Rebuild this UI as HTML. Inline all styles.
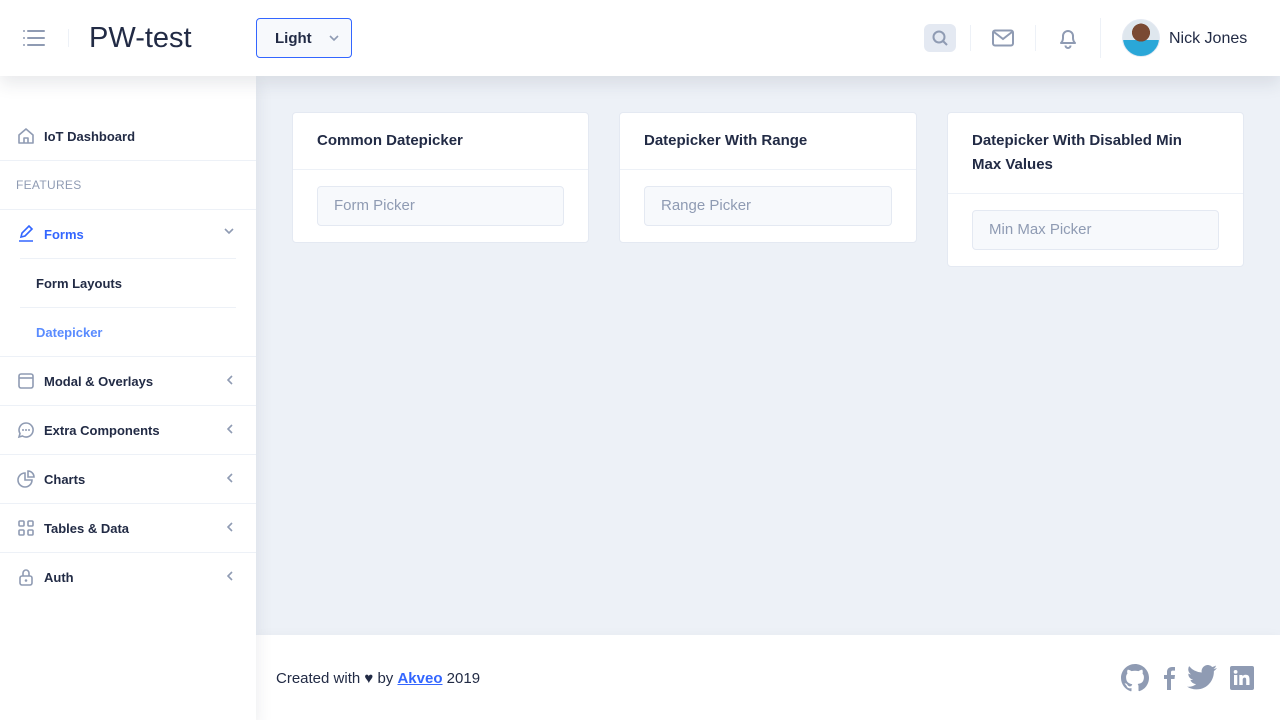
<!DOCTYPE html>
<html><head><meta charset="utf-8"><style>
*{box-sizing:border-box;margin:0;padding:0}
body{width:1280px;height:720px;overflow:hidden;background:#edf1f7;font-family:"Liberation Sans",sans-serif;color:#222b45;position:relative}
.hdr{position:absolute;left:0;top:0;width:1280px;height:76px;background:#fff;box-shadow:0 0.5rem 1rem 0 rgba(44,51,73,.1);z-index:3}
.side{position:absolute;left:0;top:76px;width:256px;height:644px;background:#fff;box-shadow:0 .5rem 1rem 0 rgba(44,51,73,.1);z-index:2}
.it{position:absolute;left:0;width:256px;height:49px;border-bottom:1px solid #edf1f7;font-size:13px;font-weight:bold;display:flex;align-items:center;padding-left:44px}
.it svg.ic{position:absolute;left:17px;top:15px}
.it .ch{position:absolute;right:22px;top:18px}
.card{position:absolute;top:112px;background:#fff;border:1px solid #e4e9f2;border-radius:4px}
.card h3{font-size:15px;font-weight:bold;padding:16px 24px;border-bottom:1px solid #edf1f7;line-height:24px}
.inp{margin:16px 24px;height:40px;border:1px solid #e4e9f2;background:#f7f9fc;border-radius:4px;color:#8f9bb3;font-size:15px;padding:0 16px;line-height:38px}
.foot{position:absolute;left:256px;top:635px;width:1024px;height:85px;background:#fff;box-shadow:0 .5rem 1rem 0 rgba(44,51,73,.1)}
.sep{position:absolute;width:1px;background:#edf1f7}
</style></head><body>
<div class="hdr">
<svg style="position:absolute;left:23px;top:29px" width="22" height="18" viewBox="0 0 22 18"><g fill="#8f9bb3"><rect x="0" y="1" width="2" height="2" rx="1"/><rect x="4" y="1" width="18" height="2" rx="1"/><rect x="0" y="8" width="2" height="2" rx="1"/><rect x="4" y="8" width="18" height="2" rx="1"/><rect x="0" y="15" width="2" height="2" rx="1"/><rect x="4" y="15" width="18" height="2" rx="1"/></g></svg>
<div class="sep" style="left:68px;top:29px;height:18px"></div>
<div style="position:absolute;left:89px;top:20px;font-size:29px;line-height:36px">PW-test</div>
<div style="position:absolute;left:256px;top:18px;width:96px;height:40px;border:1px solid #3366ff;border-radius:4px;background:#f7f9fc;font-weight:bold;font-size:15px;padding:11px 0 0 18px">Light<svg style="position:absolute;left:72px;top:16px" width="10" height="7" viewBox="0 0 10 7"><path d="M1 1l4 4 4-4" stroke="#8f9bb3" stroke-width="1.6" fill="none"/></svg></div>
<div style="position:absolute;left:924px;top:24px;width:32px;height:28px;background:#e4e9f2;border-radius:6px"><svg style="position:absolute;left:8px;top:6px" width="17" height="17" viewBox="0 0 17 17"><circle cx="7" cy="7" r="5.5" stroke="#8f9bb3" stroke-width="2" fill="none"/><path d="M11 11l4 4" stroke="#8f9bb3" stroke-width="2"/></svg></div>
<div class="sep" style="left:970px;top:25px;height:26px"></div>
<svg style="position:absolute;left:992px;top:29px" width="22" height="18" viewBox="0 0 22 18"><rect x="1" y="1.5" width="20" height="15" rx="2" stroke="#8f9bb3" stroke-width="2" fill="none"/><path d="M2 3l9 7 9-7" stroke="#8f9bb3" stroke-width="2" fill="none"/></svg>
<div class="sep" style="left:1035px;top:25px;height:26px"></div>
<svg style="position:absolute;left:1058px;top:27px" width="20" height="22" viewBox="0 0 20 22"><path d="M3 16c1-1 2-2 2-5V9a5 5 0 0110 0v2c0 3 1 4 2 5z" stroke="#8f9bb3" stroke-width="2" fill="none" stroke-linejoin="round"/><path d="M7.5 18.5a2.5 2.5 0 005 0" stroke="#8f9bb3" stroke-width="2" fill="none"/></svg>
<div class="sep" style="left:1100px;top:18px;height:40px"></div>
<div style="position:absolute;left:1122px;top:19px;width:38px;height:38px;border-radius:50%;background:radial-gradient(circle at 50% 35%,#7a4a33 0 30%,transparent 31%),linear-gradient(#dfe7ee 0 55%,#2aa7d8 55%);border:1px solid #e4e9f2"></div>
<div style="position:absolute;left:1169px;top:30px;font-size:16px">Nick Jones</div>
</div>
<div class="side">
<div class="it" style="top:36px;height:49px"><svg class="ic" width="18" height="18" viewBox="0 0 18 18"><path d="M2 8l7-6 7 6v8H2z M7 16v-5h4v5" stroke="#8f9bb3" stroke-width="1.6" fill="none" stroke-linejoin="round"/></svg>IoT Dashboard</div>
<div class="it" style="top:85px;color:#8f9bb3;font-weight:normal;font-size:12px;padding-left:16px;letter-spacing:.3px">FEATURES</div>
<div class="it" style="top:134px;color:#3366ff;border:none"><svg class="ic" width="18" height="18" viewBox="0 0 18 18"><path d="M4 12l1-4 7-7 3 3-7 7zM2 16h14" stroke="#3366ff" stroke-width="1.6" fill="none"/></svg>Forms<svg class="ch" width="10" height="7" viewBox="0 0 10 7"><path d="M1 1l4 4 4-4" stroke="#8f9bb3" stroke-width="1.6" fill="none"/></svg></div>
<div style="position:absolute;left:20px;top:182px;width:216px;height:1px;background:#edf1f7"></div>
<div class="it" style="top:183px;padding-left:36px;border:none">Form Layouts</div>
<div style="position:absolute;left:20px;top:231px;width:216px;height:1px;background:#edf1f7"></div>
<div class="it" style="top:232px;padding-left:36px;color:#598bff;height:49px">Datepicker</div>
<div class="it" style="top:281px"><svg class="ic" width="18" height="18" viewBox="0 0 18 18"><rect x="2" y="2" width="14" height="14" rx="2" stroke="#8f9bb3" stroke-width="1.6" fill="none"/><path d="M2 6h14" stroke="#8f9bb3" stroke-width="1.6"/></svg>Modal &amp; Overlays<svg class="ch" width="7" height="10" viewBox="0 0 7 10"><path d="M5 1L1 5l4 4" stroke="#8f9bb3" stroke-width="1.6" fill="none"/></svg></div>
<div class="it" style="top:330px"><svg class="ic" width="18" height="18" viewBox="0 0 18 18"><path d="M9 2a7 7 0 11-3.5 13L2 16l1-3.5A7 7 0 019 2z" stroke="#8f9bb3" stroke-width="1.6" fill="none"/><circle cx="6" cy="9" r="1" fill="#8f9bb3"/><circle cx="9" cy="9" r="1" fill="#8f9bb3"/><circle cx="12" cy="9" r="1" fill="#8f9bb3"/></svg>Extra Components<svg class="ch" width="7" height="10" viewBox="0 0 7 10"><path d="M5 1L1 5l4 4" stroke="#8f9bb3" stroke-width="1.6" fill="none"/></svg></div>
<div class="it" style="top:379px"><svg class="ic" width="18" height="18" viewBox="0 0 18 18"><path d="M8 3a7 7 0 107 7H8z M11 1v6h6a6 6 0 00-6-6z" stroke="#8f9bb3" stroke-width="1.6" fill="none"/></svg>Charts<svg class="ch" width="7" height="10" viewBox="0 0 7 10"><path d="M5 1L1 5l4 4" stroke="#8f9bb3" stroke-width="1.6" fill="none"/></svg></div>
<div class="it" style="top:428px"><svg class="ic" width="18" height="18" viewBox="0 0 18 18"><g stroke="#8f9bb3" stroke-width="1.6" fill="none"><rect x="2" y="2" width="5" height="5" rx="1"/><rect x="11" y="2" width="5" height="5" rx="1"/><rect x="2" y="11" width="5" height="5" rx="1"/><rect x="11" y="11" width="5" height="5" rx="1"/></g></svg>Tables &amp; Data<svg class="ch" width="7" height="10" viewBox="0 0 7 10"><path d="M5 1L1 5l4 4" stroke="#8f9bb3" stroke-width="1.6" fill="none"/></svg></div>
<div class="it" style="top:477px;border:none"><svg class="ic" width="18" height="18" viewBox="0 0 18 18"><rect x="3" y="8" width="12" height="9" rx="2" stroke="#8f9bb3" stroke-width="1.6" fill="none"/><path d="M6 8V5a3 3 0 016 0v3" stroke="#8f9bb3" stroke-width="1.6" fill="none"/><circle cx="9" cy="12.5" r="1.3" fill="#8f9bb3"/></svg>Auth<svg class="ch" width="7" height="10" viewBox="0 0 7 10"><path d="M5 1L1 5l4 4" stroke="#8f9bb3" stroke-width="1.6" fill="none"/></svg></div>
</div>
<div class="card" style="left:292px;width:297px;height:131px"><h3>Common Datepicker</h3><div class="inp">Form Picker</div></div>
<div class="card" style="left:619px;width:298px;height:131px"><h3>Datepicker With Range</h3><div class="inp">Range Picker</div></div>
<div class="card" style="left:947px;width:297px;height:155px"><h3 style="padding-right:50px">Datepicker With Disabled Min Max Values</h3><div class="inp">Min Max Picker</div></div>
<div class="foot">
<div style="position:absolute;left:20px;top:35px;font-size:15px">Created with ♥ by <b style="color:#3366ff;text-decoration:underline">Akveo</b> 2019</div>
<svg style="position:absolute;left:865px;top:29px" width="28" height="28" viewBox="0 0 16 16"><path fill="#8f9bb3" d="M8 0C3.6 0 0 3.6 0 8c0 3.5 2.3 6.5 5.5 7.600.4.1.5-.2.5-.4v-1.4c-2.200.5-2.700-1-2.700-1-.4-.9-.9-1.200-.9-1.200-.7-.5.1-.5.1-.5.8.1 1.200.8 1.200.8.7 1.200 1.900.9 2.300.7.1-.5.3-.9.5-1.100-1.800-.2-3.600-.9-3.600-4 0-.9.3-1.600.8-2.100-.1-.2-.4-1 .1-2.100 0 0 .7-.2 2.200.8a7.500 7.500 0 014 0c1.500-1 2.200-.8 2.200-.8.4 1.100.2 1.900.1 2.100.5.6.8 1.300.8 2.100 0 3.100-1.900 3.700-3.600 3.900.3.3.5.8.5 1.500v2.200c0 .2.1.5.6.4A8 8 0 0016 8c0-4.400-3.600-8-8-8z"/></svg>
<svg style="position:absolute;left:906px;top:31px" width="14" height="24" viewBox="0 0 14 24"><path fill="#8f9bb3" d="M9 24V13h3.5l.5-4H9V6.5C9 5.4 9.3 4.6 11 4.6h2V1.1C12.6 1 11.4 1 10 1 7.1 1 5 2.8 5 6v3H2v4h3v11z"/></svg>
<svg style="position:absolute;left:931px;top:30px" width="30" height="25" viewBox="0 0 24 20"><path fill="#8f9bb3" d="M24 2.4a10 10 0 01-2.8.8A5 5 0 0023.3.4a10 10 0 01-3.1 1.2A4.9 4.9 0 0011.8 6 14 14 0 011.7.9a4.9 4.9 0 001.5 6.6 4.9 4.9 0 01-2.2-.6 4.9 4.9 0 003.9 4.9 5 5 0 01-2.2.1 4.9 4.9 0 004.6 3.4A9.9 9.9 0 010 17.3 14 14 0 007.5 19.5c9.1 0 14-7.5 14-14v-.6A10 10 0 0024 2.4z"/></svg>
<svg style="position:absolute;left:974px;top:31px" width="24" height="24" viewBox="0 0 24 24"><rect width="24" height="24" rx="2" fill="#8f9bb3"/><path fill="#fff" d="M4 9h3.3v10H4zM5.6 4a1.9 1.9 0 110 3.8 1.9 1.9 0 010-3.8zM9.3 9h3.2v1.4c.5-.8 1.5-1.6 3.1-1.6 3.3 0 3.9 2.1 3.9 4.9V19h-3.3v-4.8c0-1.2 0-2.6-1.6-2.6s-1.9 1.2-1.9 2.5V19H9.3z"/></svg>
</div>
</body></html>
